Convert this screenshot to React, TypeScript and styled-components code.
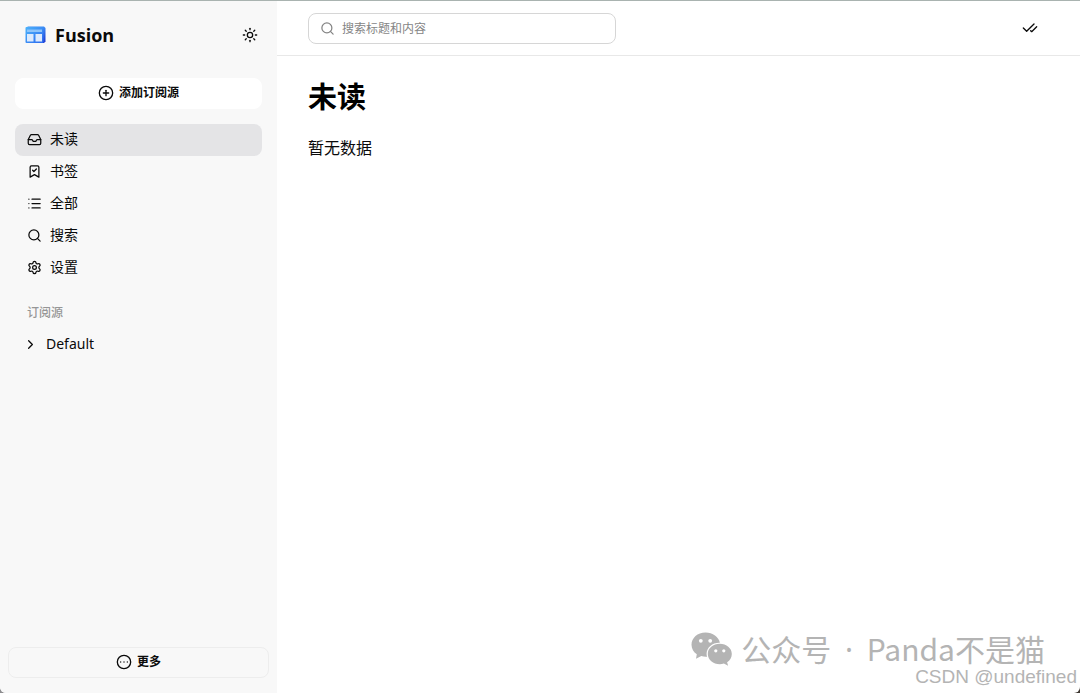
import React from 'react';
import styled, { createGlobalStyle } from 'styled-components';
import {
  BookmarkCheck,
  CheckCheck,
  ChevronRight,
  CircleEllipsis,
  CirclePlus,
  Inbox,
  List,
  Search,
  Settings,
  Sun,
} from 'lucide-react';

const GlobalStyle = createGlobalStyle`
  *, *::before, *::after { box-sizing: border-box; }
  body {
    margin: 0;
    background: linear-gradient(to right, #8d8d8f, #3f3832);
    color: #0a0a0a;
    font-family: "Noto Sans", "Noto Sans CJK SC", sans-serif;
    font-size: 14px;
    line-height: 20px;
  }
  button, input { font: inherit; color: inherit; }
  h1, p, ul { margin: 0; padding: 0; }
`;

const Shell = styled.div`
  position: relative;
  display: grid;
  grid-template-columns: 277px minmax(0, 1fr);
  min-height: 100vh;
  border-top: 1px solid #a9b3b0;
  border-radius: 0 0 6px 6px;
  overflow: hidden;
  background: #fff;
`;

const Sidebar = styled.aside`
  display: flex;
  flex-direction: column;
  background: #f8f8f8;
`;

const SidebarBody = styled.div`
  display: flex;
  flex-direction: column;
  flex: 1;
  padding: 18px 15px 0;
`;

const BrandRow = styled.div`
  display: flex;
  align-items: center;
  justify-content: space-between;
  height: 32px;
  padding: 0 3px 0 10px;
`;

const Brand = styled.a`
  display: flex;
  align-items: center;
  gap: 9px;
  color: inherit;
  font-family: "Open Sans", sans-serif;
  font-size: 18px;
  font-weight: 700;
  text-decoration: none;
`;

const IconButton = styled.button`
  display: grid;
  place-items: center;
  width: 18px;
  height: 18px;
  padding: 0;
  border: 0;
  background: none;
`;

const WideButton = styled.button<{ $outlined?: boolean }>`
  display: flex;
  align-items: center;
  justify-content: center;
  gap: 5px;
  height: 31px;
  padding: 0 0 1px;
  border: 1px solid ${(p) => (p.$outlined ? '#ededed' : '#fff')};
  border-radius: 8px;
  background: ${(p) => (p.$outlined ? 'transparent' : '#fff')};
  font-size: 12px;
  font-weight: 700;
`;

const AddArea = styled.div`
  display: grid;
  padding: 27px 0 15px;
`;

const NavList = styled.ul`
  list-style: none;
`;

const NavLink = styled.a<{ $active?: boolean }>`
  display: flex;
  align-items: center;
  gap: 8px;
  height: 32px;
  padding: 0 12px 2px;
  border-radius: 8px;
  background: ${(p) => (p.$active ? '#e4e4e6' : 'transparent')};
  color: inherit;
  text-decoration: none;
`;

const GroupTitle = styled.p`
  padding: 19px 12px 5px;
  color: #969696;
  font-size: 12px;
  line-height: 20px;
  font-weight: 500;
`;

const GroupButton = styled.button`
  display: flex;
  align-items: center;
  gap: 8px;
  height: 32px;
  padding: 0 8px;
  border: 0;
  background: none;
`;

const SidebarFooter = styled.div`
  display: grid;
  padding: 15px 8px;
`;

const Main = styled.main`
  display: flex;
  flex-direction: column;
`;

const TopBar = styled.header`
  display: flex;
  align-items: center;
  justify-content: space-between;
  height: 55px;
  padding: 0 41px 0 31px;
  border-bottom: 1px solid #e8e8e8;
`;

const SearchBox = styled.label`
  display: flex;
  align-items: center;
  gap: 7px;
  width: 308px;
  height: 31px;
  padding: 0 11px;
  border: 1px solid #d6d6d6;
  border-radius: 8px;
  color: #858585;
`;

const SearchInput = styled.input`
  flex: 1;
  min-width: 0;
  padding: 2px 0 0;
  border: 0;
  outline: 0;
  background: none;
  font-size: 12px;
  &::placeholder { color: #858585; opacity: 1; }
`;

const Content = styled.section`
  padding: 19px 31px;
`;

const Title = styled.h1`
  color: #000;
  font-size: 29px;
  line-height: 44px;
  font-weight: 700;
`;

const Empty = styled.p`
  padding-top: 17px;
  font-size: 16px;
  line-height: 24px;
`;

const Credits = styled.div`
  position: absolute;
  right: 3px;
  bottom: 7px;
  display: flex;
  flex-direction: column;
  align-items: flex-end;
  color: #b4b4b4;
  pointer-events: none;
`;

const Account = styled.div`
  display: flex;
  align-items: center;
  gap: 9px;
  padding-right: 32px;
  font-family: "Noto Sans CJK SC", sans-serif;
  font-size: 30px;
  line-height: 36px;
`;

const Dot = styled.span`
  padding: 0 7px;
  font-family: "Noto Sans", sans-serif;
`;

const Handle = styled.div`
  font-family: "Liberation Sans", sans-serif;
  font-size: 19px;
  line-height: 18px;
`;

const Logo = () => (
  <svg width="21" height="18" viewBox="0 0 21 18" aria-hidden="true">
    <defs>
      <linearGradient id="logoFront" x1="0" y1="0" x2="1" y2="1">
        <stop offset="0" stopColor="#4cb4fb" />
        <stop offset="1" stopColor="#2b68ef" />
      </linearGradient>
      <linearGradient id="logoSide" x1="0" y1="0" x2="0" y2="1">
        <stop offset="0" stopColor="#3c8df5" />
        <stop offset="1" stopColor="#1c35cf" />
      </linearGradient>
    </defs>
    <path d="M2.500 0.500H19L20.500 2V15.500L19 17H4Z" fill="url(#logoSide)" />
    <rect x="0.500" y="1" width="18" height="16" rx="1" fill="url(#logoFront)" />
    <rect x="2" y="3.500" width="15" height="2.500" fill="#8cc4fb" />
    <rect x="2" y="8" width="6.500" height="7.500" fill="#dceafd" />
    <rect x="10.500" y="8" width="6.500" height="7.500" fill="#dceafd" />
  </svg>
);

const ChatLogo = () => (
  <svg width="41" height="34" viewBox="0 0 41 34" aria-hidden="true">
    <path
      d="M14.500 0.500C6.500 0.500 0.500 6 0.500 12.800c0 4 2.100 7.300 5.300 9.500L5 26.800l5.300-2.700c1.400.4 2.900.6 4.400.6h1.400c-.4-1-.5-2-.5-3 0-6.200 5.700-11 12.600-11h.7C27.700 5 21.800 0.500 14.500 0.500Z"
      fill="#b4b4b4"
    />
    <path
      d="M28.800 11.800c-6.700 0-12 4.400-12 10.100s5.300 10.300 12 10.300c1.400 0 2.800-.2 4.100-.6l4.200 2.200-1-3.600c2.900-2 4.700-4.900 4.700-8.300 0-5.700-5.400-10.100-12-10.100Z"
      fill="#b4b4b4"
    />
    <g fill="#fff">
      <circle cx="9.800" cy="8.800" r="1.900" />
      <circle cx="19.200" cy="8.800" r="1.900" />
      <circle cx="24.800" cy="18.800" r="1.600" />
      <circle cx="32.800" cy="18.800" r="1.600" />
    </g>
  </svg>
);

const navItems = [
  { label: '未读', Icon: Inbox, active: true },
  { label: '书签', Icon: BookmarkCheck },
  { label: '全部', Icon: List },
  { label: '搜索', Icon: Search },
  { label: '设置', Icon: Settings },
];

export default function App() {
  return (
    <>
      <GlobalStyle />
      <Shell>
        <Sidebar>
          <SidebarBody>
            <BrandRow>
              <Brand href="#">
                <Logo />
                Fusion
              </Brand>
              <IconButton type="button" aria-label="切换主题">
                <Sun size={16} />
              </IconButton>
            </BrandRow>
            <AddArea>
              <WideButton type="button">
                <CirclePlus size={16} />
                添加订阅源
              </WideButton>
            </AddArea>
            <nav>
              <NavList>
                {navItems.map(({ label, Icon, active }) => (
                  <li key={label}>
                    <NavLink href="#" $active={active} aria-current={active ? 'page' : undefined}>
                      <Icon size={15} />
                      {label}
                    </NavLink>
                  </li>
                ))}
              </NavList>
            </nav>
            <GroupTitle>订阅源</GroupTitle>
            <GroupButton type="button" aria-expanded={false}>
              <ChevronRight size={15} />
              Default
            </GroupButton>
          </SidebarBody>
          <SidebarFooter>
            <WideButton type="button" $outlined>
              <CircleEllipsis size={16} />
              更多
            </WideButton>
          </SidebarFooter>
        </Sidebar>
        <Main>
          <TopBar>
            <SearchBox>
              <Search size={15} />
              <SearchInput type="text" placeholder="搜索标题和内容" aria-label="搜索标题和内容" />
            </SearchBox>
            <IconButton type="button" aria-label="全部标为已读">
              <CheckCheck size={16} />
            </IconButton>
          </TopBar>
          <Content>
            <Title>未读</Title>
            <Empty>暂无数据</Empty>
          </Content>
        </Main>
        <Credits>
          <Account>
            <ChatLogo />
            <span>
              公众号 <Dot>·</Dot> Panda不是猫
            </span>
          </Account>
          <Handle>CSDN @undefined</Handle>
        </Credits>
      </Shell>
    </>
  );
}
